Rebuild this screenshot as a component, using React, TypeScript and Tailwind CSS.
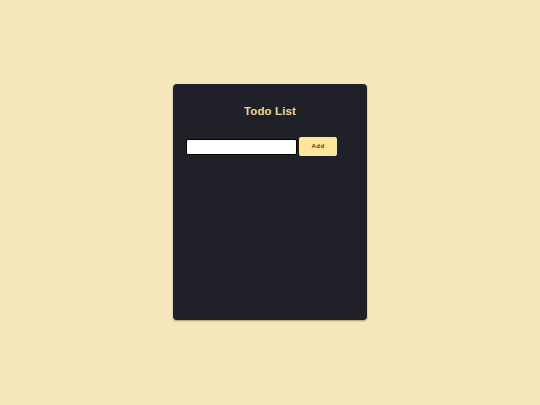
export default function App() {
  return (
    <div className="w-[540px] h-[405px] bg-[#f6e7ba] flex items-start justify-center pt-[84px] font-['Liberation_Sans',Arial,sans-serif]">
      <div className="w-[194px] h-[236px] bg-[#202029] rounded-[4px] shadow-[0_1px_2px_rgba(0,0,0,0.35)] px-[13px] pt-[20px]">
        <h1 className="text-center text-[11.5px] font-bold text-[#ecd69b] leading-[14px] tracking-[0.1px]">Todo List</h1>
        <div className="flex items-center gap-[2px] mt-[19px]">
          <input
            type="text"
            className="w-[111px] h-[16px] bg-white border border-black rounded-[2px] outline-none"
          />
          <button className="w-[38px] h-[19px] bg-[#fee59c] rounded-[2px] text-[6px] font-bold text-[#3a3a3a] tracking-[0.5px]">
            Add
          </button>
        </div>
      </div>
    </div>
  );
}
